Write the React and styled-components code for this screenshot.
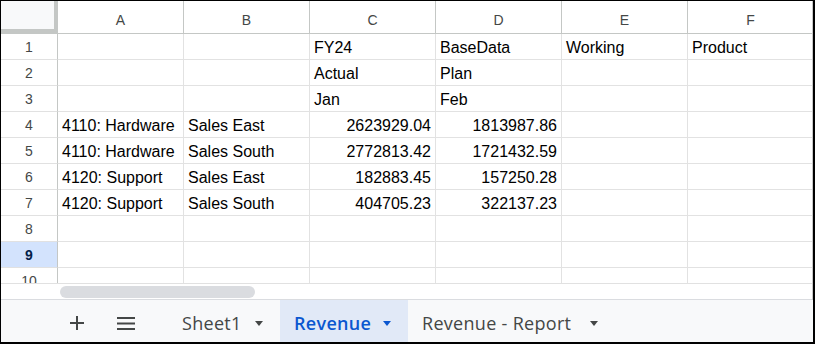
import React from 'react';
import styled, { createGlobalStyle } from 'styled-components';

const Global = createGlobalStyle`
  html, body { margin: 0; padding: 0; background: #fff; }
  * { box-sizing: border-box; }
`;

const Frame = styled.div`
  width: 815px;
  height: 344px;
  border-style: solid;
  border-color: #000;
  border-width: 1px 2px 2px 1px;
  display: flex;
  flex-direction: column;
  overflow: hidden;
  background: #fff;
  font-family: "Liberation Sans", Arial, sans-serif;
`;

const SheetArea = styled.div`
  display: flex;
  flex-direction: column;
  border-right: 1px solid #c7c7c7;
`;

const Viewport = styled.div`
  height: 282px;
  overflow: hidden;
`;

const Grid = styled.div`
  display: grid;
  grid-template-columns: 57px repeat(6, 126px);
  grid-template-rows: 33px;
  grid-auto-rows: 26px;
  width: max-content;
`;

const Corner = styled.div`
  background: #f8f9fa;
  border-right: 4px solid #c4c7c5;
  border-bottom: 5px solid #c4c7c5;
`;

const ColHeader = styled.div`
  display: flex;
  align-items: center;
  justify-content: center;
  padding-top: 5px;
  border-right: 1px solid #c4c7c5;
  border-bottom: 1px solid #c4c7c5;
  font-size: 14px;
  color: #444746;
  background: #fff;
`;

const RowHeader = styled.div`
  display: flex;
  align-items: center;
  justify-content: center;
  border-right: 1px solid #c4c7c5;
  border-bottom: 1px solid #e1e1e1;
  font-size: 14px;
  color: ${(p) => (p.$selected ? '#041e49' : '#444746')};
  font-weight: ${(p) => (p.$selected ? 700 : 400)};
  background: ${(p) => (p.$selected ? '#d3e3fd' : '#fff')};
`;

const Cell = styled.div`
  display: flex;
  align-items: flex-end;
  justify-content: ${(p) => (p.$num ? 'flex-end' : 'flex-start')};
  padding: 0 4px 2px 4px;
  border-right: 1px solid #e2e2e2;
  border-bottom: 1px solid #e2e2e2;
  font-size: 16px;
  color: #000;
  white-space: nowrap;
  overflow: hidden;
`;

const ScrollRow = styled.div`
  height: 17px;
  border-top: 1px solid #e1e1e1;
  border-bottom: 1px solid #dadce0;
  display: flex;
  align-items: center;
  padding-left: 59px;
`;

const Thumb = styled.div`
  width: 195px;
  height: 12px;
  border-radius: 6px;
  background: #dadce0;
`;

const TabBar = styled.div`
  flex: 1;
  display: flex;
  align-items: stretch;
  background: #f8f9fa;
  padding-left: 56px;
`;

const IconButton = styled.div`
  width: 40px;
  display: flex;
  align-items: center;
  justify-content: center;
  padding-top: 4px;
  color: #444746;
  margin-right: ${(p) => p.$gap || 0}px;
`;

const Tab = styled.div`
  width: ${(p) => p.$width}px;
  display: flex;
  align-items: center;
  justify-content: space-between;
  padding: 4px 17px 0 14px;
  background: ${(p) => (p.$active ? '#e1e9f7' : 'transparent')};
  color: ${(p) => (p.$active ? '#0b57d0' : '#444746')};
  font-family: "Open Sans", Roboto, sans-serif;
  font-size: 18px;
  letter-spacing: 0.3px;
  font-weight: ${(p) => (p.$active ? 600 : 500)};
  white-space: nowrap;
`;

const Caret = styled.span`
  width: 0;
  height: 0;
  border-left: 4.5px solid transparent;
  border-right: 4.5px solid transparent;
  border-top: 5px solid currentColor;
  margin-top: 1px;
`;

const cols = ['A', 'B', 'C', 'D', 'E', 'F'];

const rows = [
  ['', '', 'FY24', 'BaseData', 'Working', 'Product'],
  ['', '', 'Actual', 'Plan', '', ''],
  ['', '', 'Jan', 'Feb', '', ''],
  ['4110: Hardware', 'Sales East', '2623929.04', '1813987.86', '', ''],
  ['4110: Hardware', 'Sales South', '2772813.42', '1721432.59', '', ''],
  ['4120: Support', 'Sales East', '182883.45', '157250.28', '', ''],
  ['4120: Support', 'Sales South', '404705.23', '322137.23', '', ''],
  ['', '', '', '', '', ''],
  ['', '', '', '', '', ''],
  ['', '', '', '', '', ''],
];

const isNum = (v) => v !== '' && !isNaN(Number(v));

const PlusIcon = () => (
  <svg width="14" height="14" viewBox="0 0 14 14">
    <path d="M7 0V14M0 7H14" stroke="currentColor" strokeWidth="2" fill="none" />
  </svg>
);

const MenuIcon = () => (
  <svg width="18" height="13" viewBox="0 0 18 13">
    <path d="M0 1H18M0 6.5H18M0 12H18" stroke="currentColor" strokeWidth="2" fill="none" />
  </svg>
);

const tabs = [
  { name: 'Sheet1', width: 112 },
  { name: 'Revenue', width: 128, active: true },
  { name: 'Revenue - Report', width: 207 },
];

export default function App() {
  return (
    <>
      <Global />
      <Frame>
        <SheetArea>
          <Viewport>
            <Grid>
              <Corner />
              {cols.map((c) => (
                <ColHeader key={c}>{c}</ColHeader>
              ))}
              {rows.map((r, i) => (
                <React.Fragment key={i}>
                  <RowHeader $selected={i === 8}>{i + 1}</RowHeader>
                  {r.map((v, j) => (
                    <Cell key={j} $num={isNum(v)}>
                      {v}
                    </Cell>
                  ))}
                </React.Fragment>
              ))}
            </Grid>
          </Viewport>
          <ScrollRow>
            <Thumb />
          </ScrollRow>
        </SheetArea>
        <TabBar>
          <IconButton $gap={9}>
            <PlusIcon />
          </IconButton>
          <IconButton $gap={22}>
            <MenuIcon />
          </IconButton>
          {tabs.map((t) => (
            <Tab key={t.name} $width={t.width} $active={t.active}>
              <span>{t.name}</span>
              <Caret />
            </Tab>
          ))}
        </TabBar>
      </Frame>
    </>
  );
}
